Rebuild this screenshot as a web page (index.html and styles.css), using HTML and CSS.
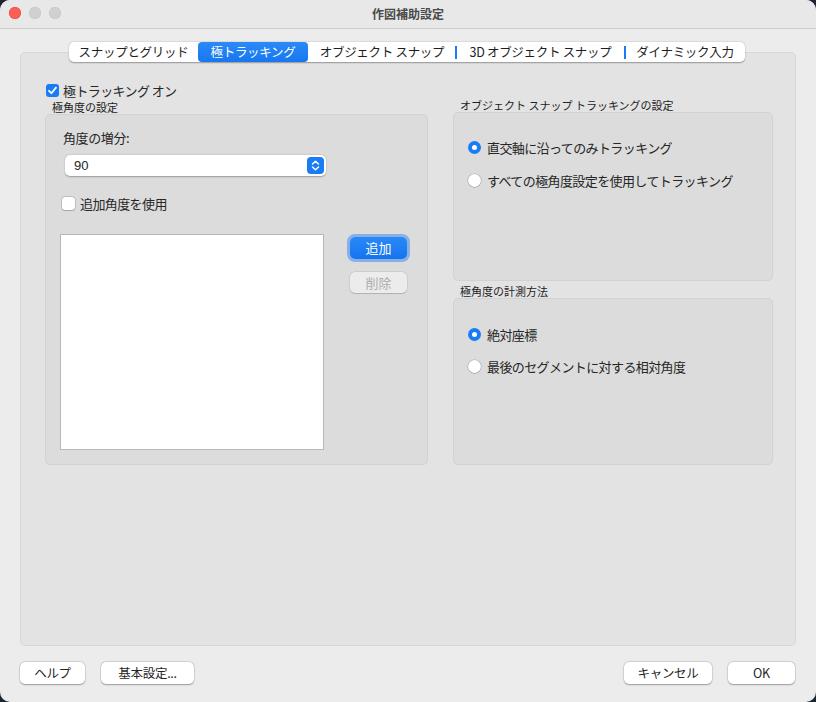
FILE: index.html
```html
<!DOCTYPE html>
<html lang="ja">
<head>
<meta charset="utf-8">
<link rel="stylesheet" href="styles.css">
</head>
<body>
<div class="window">
  <div class="titlebar">
    <div class="lights">
      <span class="light red"></span>
      <span class="light gray"></span>
      <span class="light gray"></span>
    </div>
    <div class="title">作図補助設定</div>
  </div>
  <div class="tabs">
    <div class="tab w1">スナップとグリッド</div>
    <div class="tab w2 active">極トラッキング</div>
    <div class="tab w3">オブジェクト スナップ</div>
    <div class="tab w4 sep">3D オブジェクト スナップ</div>
    <div class="tab w5 sep">ダイナミック入力</div>
  </div>
  <div class="panel">
    <label class="check-row main-check">
      <span class="checkbox checked"><svg viewBox="0 0 13 13" width="13" height="13"><path d="M3 6.8 L5.4 9.2 L10 3.6" fill="none" stroke="#fff" stroke-width="1.8" stroke-linecap="round" stroke-linejoin="round"/></svg></span>
      <span>極トラッキング オン</span>
    </label>
    <div class="columns">
      <div class="col-left">
        <div class="group-label left-label">極角度の設定</div>
        <div class="group left-group">
          <div class="field-label">角度の増分:</div>
          <div class="select">
            <span class="select-value">90</span>
            <span class="stepper"><svg viewBox="0 0 17 17" width="17" height="17"><path d="M5.5 7 L8.5 4.2 L11.5 7" fill="none" stroke="#fff" stroke-width="1.5" stroke-linecap="round" stroke-linejoin="round"/><path d="M5.5 10 L8.5 12.8 L11.5 10" fill="none" stroke="#fff" stroke-width="1.5" stroke-linecap="round" stroke-linejoin="round"/></svg></span>
          </div>
          <label class="check-row extra-check">
            <span class="checkbox"></span>
            <span>追加角度を使用</span>
          </label>
          <div class="list-row">
            <div class="listbox"></div>
            <div class="list-buttons">
              <div class="btn primary">追加</div>
              <div class="btn disabled">削除</div>
            </div>
          </div>
        </div>
      </div>
      <div class="col-right">
        <div class="group-label">オブジェクト スナップ トラッキングの設定</div>
        <div class="group right-group1">
          <div class="radio-row"><span class="radio on"></span><span>直交軸に沿ってのみトラッキング</span></div>
          <div class="radio-row"><span class="radio"></span><span>すべての極角度設定を使用してトラッキング</span></div>
        </div>
        <div class="group-label label2">極角度の計測方法</div>
        <div class="group right-group2">
          <div class="radio-row"><span class="radio on"></span><span>絶対座標</span></div>
          <div class="radio-row"><span class="radio"></span><span>最後のセグメントに対する相対角度</span></div>
        </div>
      </div>
    </div>
  </div>
  <div class="footer">
    <div class="btn foot w-help">ヘルプ</div>
    <div class="btn foot w-pref">基本設定...</div>
    <div class="spacer"></div>
    <div class="btn foot w-cancel">キャンセル</div>
    <div class="btn foot w-ok">OK</div>
  </div>
</div>
</body>
</html>
```

FILE: styles.css
```css
html, body {
  margin: 0;
  padding: 0;
  background: #1d2533;
}
body {
  width: 816px;
  height: 702px;
  overflow: hidden;
  font-family: "Noto Sans CJK JP", "Noto Sans", "Liberation Sans", sans-serif;
  color: #262626;
  font-size: 13px;
}
.window {
  width: 816px;
  height: 702px;
  background: #ececec;
  border-radius: 10px;
  overflow: hidden;
  display: flex;
  flex-direction: column;
}
.titlebar {
  height: 28px;
  background: #e8e8e8;
  border-bottom: 1px solid #cdcdcd;
  position: relative;
  display: flex;
  align-items: center;
  justify-content: center;
  flex-shrink: 0;
}
.lights {
  position: absolute;
  left: 9px;
  top: 7px;
  display: flex;
  gap: 8px;
}
.light {
  width: 12px;
  height: 12px;
  border-radius: 50%;
  display: block;
}
.light.red { background: #fd5f57; box-shadow: inset 0 0 0 0.5px #e0443e; }
.light.gray { background: #d0d0d0; box-shadow: inset 0 0 0 0.5px #c4c4c4; }
.title {
  font-size: 12px;
  font-weight: 600;
  color: #4a4a4a;
  margin-top: -2px;
}
.tabs {
  margin-top: 13px;
  align-self: center;
  margin-left: -2px;
  display: flex;
  height: 20px;
  background: #fff;
  border-radius: 5px;
  box-shadow: 0 0.5px 1.5px rgba(0,0,0,0.35);
  position: relative;
  z-index: 2;
  flex-shrink: 0;
}
.tab {
  height: 20px;
  line-height: 20px;
  text-align: center;
  font-size: 12.5px;
  letter-spacing: -0.3px;
  color: #1e1e1e;
  position: relative;
}
.tab.w1 { width: 129px; }
.tab.w2 { width: 110px; }
.tab.w3 { width: 148px; }
.tab.w4 { width: 169px; }
.tab.w5 { width: 120px; }
.tab.active {
  background: linear-gradient(#2b8af7, #1677f0);
  color: #fff;
  border-radius: 4px;
}
.tab.sep::before {
  content: "";
  position: absolute;
  left: -1px;
  top: 4px;
  width: 2px;
  height: 13px;
  background: #1a7cf5;
}
.panel {
  margin: -10px 20px 0 20px;
  height: 592px;
  background: #e3e3e3;
  border: 1px solid #d7d7d7;
  border-radius: 5px;
  padding: 0 0 0 24px;
  display: flex;
  flex-direction: column;
  flex-shrink: 0;
}
.check-row {
  display: flex;
  align-items: center;
  gap: 4px;
  font-size: 13px;
  letter-spacing: -0.6px;
}
.main-check {
  margin-top: 29px;
  margin-left: 1px;
  height: 16px;
}
.checkbox {
  width: 13px;
  height: 13px;
  border-radius: 3px;
  background: #fff;
  box-shadow: 0 0 0 0.5px rgba(0,0,0,0.25), 0 0.5px 1px rgba(0,0,0,0.15);
  display: block;
  flex-shrink: 0;
}
.checkbox.checked {
  background: #1a7cf5;
  box-shadow: none;
}
.checkbox svg { display: block; }
.columns {
  display: flex;
  gap: 25px;
}
.col-left { width: 383px; }
.col-right { width: 320px; }
.group-label {
  font-size: 11px;
  line-height: 14px;
  height: 14px;
  padding-left: 7px;
  color: #222;
}
.left-label { margin-top: 2px; }
.label2 { margin-top: 3px; }
.group {
  background: #dcdcdc;
  border: 1px solid #d2d2d2;
  border-radius: 5px;
  box-sizing: border-box;
}
.left-group {
  height: 351px;
  padding: 16px 0 0 14px;
}
.field-label {
  line-height: 14px;
  margin-left: 3px;
  font-size: 13px;
  letter-spacing: -0.4px;
}
.select {
  margin: 10px 0 0 5px;
  width: 261px;
  height: 21px;
  background: #fff;
  border-radius: 5px;
  box-shadow: 0 0.5px 1.5px rgba(0,0,0,0.3);
  display: flex;
  align-items: center;
  justify-content: space-between;
  box-sizing: border-box;
  padding: 0 2px 0 9px;
}
.select-value { font-size: 13px; font-family: "Liberation Sans", "Noto Sans CJK JP", sans-serif; }
.stepper {
  width: 17px;
  height: 17px;
  background: #1a7cf5;
  border-radius: 4px;
  display: block;
}
.stepper svg { display: block; }
.extra-check {
  margin: 21px 0 0 2px;
  height: 13px;
  gap: 5px;
}
.list-row {
  display: flex;
  margin-top: 24px;
}
.listbox {
  width: 264px;
  height: 216px;
  background: #fff;
  border: 1px solid #b8b8b8;
  box-sizing: border-box;
}
.list-buttons {
  margin: 3px 0 0 26px;
  display: flex;
  flex-direction: column;
  gap: 13px;
}
.btn {
  height: 22px;
  line-height: 22px;
  border-radius: 5px;
  text-align: center;
  font-size: 13px;
  box-sizing: border-box;
  background: #fff;
  box-shadow: 0 0 0 0.5px rgba(0,0,0,0.12), 0 0.5px 1.5px rgba(0,0,0,0.3);
}
.list-buttons .btn { width: 57px; }
.btn.primary {
  background: linear-gradient(#2a89f7, #1574ef);
  color: #fff;
  box-shadow: 0 0 0 3px rgba(70,140,235,0.55);
}
.btn.disabled {
  height: 21px;
  line-height: 21px;
  background: #ececec;
  color: #adadad;
  box-shadow: 0 0 0 0.5px rgba(0,0,0,0.1), 0 0.5px 1px rgba(0,0,0,0.15);
}
.right-group1 {
  height: 169px;
  padding: 28px 0 0 14px;
}
.right-group2 {
  height: 167px;
  padding: 29px 0 0 14px;
}
.radio-row {
  display: flex;
  align-items: center;
  gap: 6px;
  height: 13px;
  font-size: 13px;
  letter-spacing: -0.6px;
}
.right-group1 .radio-row + .radio-row { margin-top: 20px; }
.right-group2 .radio-row + .radio-row { margin-top: 19px; }
.radio {
  width: 13px;
  height: 13px;
  border-radius: 50%;
  background: #fff;
  box-shadow: 0 0 0 0.5px rgba(0,0,0,0.2), 0 0.5px 1px rgba(0,0,0,0.2);
  display: block;
  flex-shrink: 0;
  position: relative;
}
.radio.on {
  background: #1a7cf5;
  box-shadow: none;
}
.radio.on::after {
  content: "";
  position: absolute;
  left: 4px;
  top: 4px;
  width: 5px;
  height: 5px;
  border-radius: 50%;
  background: #fff;
}
.footer {
  display: flex;
  margin: 16px 21px 0 20px;
  gap: 16px;
}
.spacer { flex: 1; }
.btn.foot { font-size: 12.5px; letter-spacing: -0.3px; }
.w-help { width: 65px; }
.w-pref { width: 93px; }
.w-cancel { width: 88px; }
.w-ok { width: 67px; }
```
